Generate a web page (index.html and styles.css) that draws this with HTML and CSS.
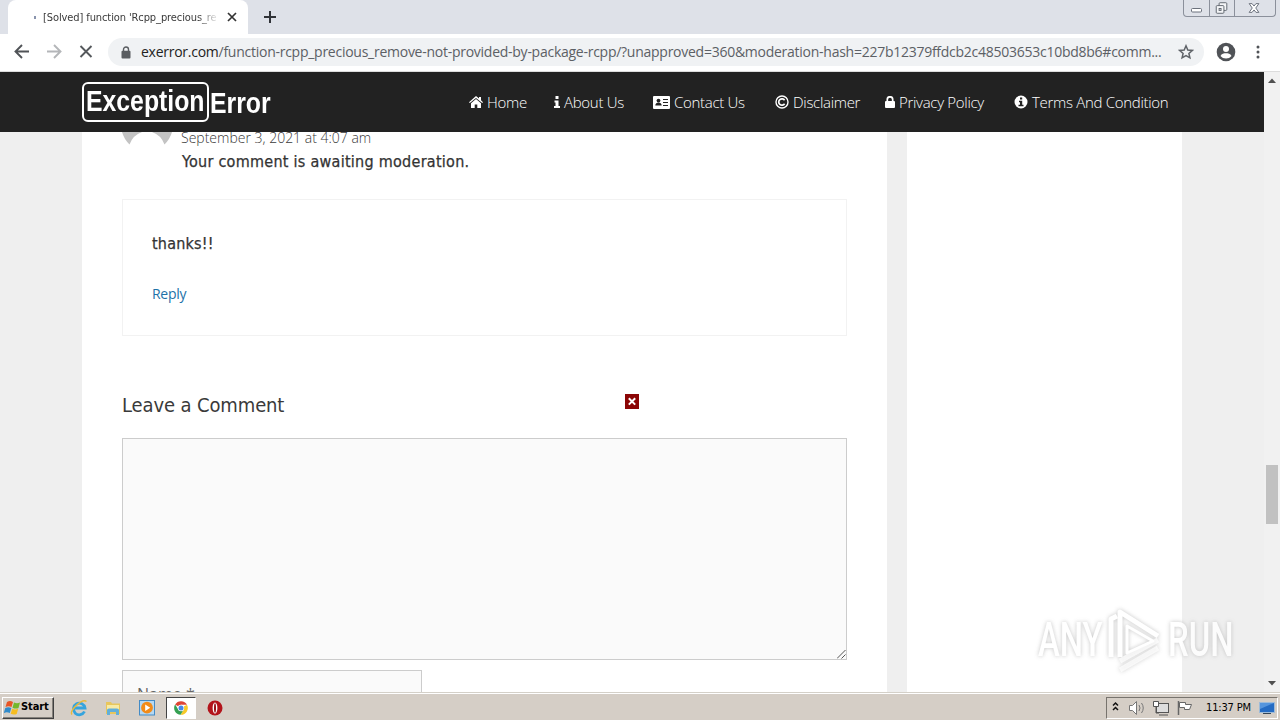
FILE: index.html
```
<!DOCTYPE html>
<html lang="en">
  <head>
    <meta charset="utf-8" />
    <title>[Solved] function 'Rcpp_precious_remove'</title>
    <link rel="stylesheet" href="styles.css">
  </head>
  <body>
    <div class="tabstrip">
      <div class="tab">
        <span class="tab-dot"></span>
        <span class="tab-title">[Solved] function 'Rcpp_precious_re</span>
        <svg class="tab-close" width="10" height="10" viewBox="0 0 10 10"><path d="M1 1l8 8M9 1L1 9" stroke="#333" stroke-width="1.7"/></svg>
      </div>
      <svg class="new-tab" width="14" height="14" viewBox="0 0 14 14"><path d="M7 1v12M1 7h12" stroke="#303338" stroke-width="2"/></svg>
      <div class="window-buttons">
        <svg width="25" height="16" viewBox="0 0 25 16"><rect x="7.500" y="8.500" width="10" height="3.500" rx="1" fill="#fff" stroke="#6b717c"/></svg>
        <svg width="25" height="16" viewBox="0 0 25 16"><g fill="#f4f5f7" stroke="#60666f"><rect x="9.500" y="2.500" width="8" height="8" rx="1"/><rect x="6.500" y="5.500" width="8" height="8" rx="1"/><rect x="9.500" y="8.500" width="2" height="2"/></g></svg>
        <svg width="41" height="16" viewBox="0 0 41 16"><path d="M14.500 3.500h3l2 2.500 2-2.500h3l-3.200 4.500 3.200 4.500h-3l-2-2.500-2 2.500h-3l3.200-4.500z" fill="#fff" stroke="#6b717c"/></svg>
      </div>
    </div>

    <div class="toolbar">
      <svg width="100" height="38" viewBox="0 0 100 38" fill="none" stroke-width="1.9">
        <path d="M29 18.500H16M22 12l-6.500 6.500L22 25" stroke="#505357"/>
        <path d="M47 18.500h13M54 12l6.500 6.500L54 25" stroke="#b4b6b9"/>
        <path d="M80.500 13l11 11M91.500 13l-11 11" stroke="#55585c"/>
      </svg>
      <div class="omnibox">
        <svg width="10" height="13" viewBox="0 0 10 13"><path d="M2.500 6V3.500a2.500 2.500 0 0 1 5 0V6" fill="none" stroke="#5a5d61" stroke-width="1.400"/><rect x="0.500" y="4.800" width="9" height="7.700" rx="1" fill="#5a5d61"/></svg>
        <span class="url"><b>exerror.com</b>/function-rcpp_precious_remove-not-provided-by-package-rcpp/?unapproved=360&amp;moderation-hash=227b12379ffdcb2c48503653c10bd8b6#comm...</span>
        <svg class="star" width="16" height="16" viewBox="0 0 16 16"><path d="M8 1.800l1.800 4.200 4.500.4-3.400 3 1 4.400L8 11.500l-3.900 2.300 1-4.400-3.400-3 4.500-.4z" fill="none" stroke="#5f6368" stroke-width="1.500"/></svg>
      </div>
      <svg class="profile" width="20" height="20" viewBox="0 0 20 20"><circle cx="10" cy="10" r="9.300" fill="#505357"/><circle cx="10" cy="7" r="3" fill="#fff"/><path d="M4.500 14c1-2.200 3.500-2.700 5.500-2.700s4.500.5 5.500 2.700c-1.300 1.700-3.300 2.500-5.500 2.500S5.800 15.700 4.500 14z" fill="#fff"/></svg>
      <svg class="kebab" width="4" height="16" viewBox="0 0 4 16" fill="#505357"><circle cx="2" cy="3" r="1.500"/><circle cx="2" cy="8" r="1.500"/><circle cx="2" cy="13" r="1.500"/></svg>
    </div>

    <div class="viewport">
      <div class="page">
        <header class="site-header">
          <div class="logo"><span class="logo-box"><span>Exception</span></span><span class="logo-error">Error</span></div>
          <nav class="nav">
            <a class="home"><svg width="14" height="12" viewBox="0 0 14 12" fill="#fff"><path d="M7 0l3 2.600V1h2v3.300L14 6.200l-.8.900L7 1.900.8 7.100 0 6.200z"/><path d="M7 3l5 4.200V12H8.300V8.500H5.700V12H2V7.200z"/></svg><span>Home</span></a>
            <a class="about"><svg width="6" height="12" viewBox="0 0 6 12" fill="#fff"><path d="M1.500 0h3v3h-3zM.500 4.500h4V10H6v2H0v-2h1.500V6.500h-1z"/></svg><span>About Us</span></a>
            <a class="contact"><svg width="17" height="13" viewBox="0 0 17 13"><rect width="17" height="13" rx="1" fill="#fff"/><circle cx="5.500" cy="4.600" r="1.900" fill="#222"/><path d="M2.300 9.500c0-4 6.400-4 6.400 0zM10 3h5v1h-5zM10 6h5v1h-5zM10 9h5v1h-5z" fill="#222"/></svg><span>Contact Us</span></a>
            <a class="disclaimer"><svg width="14" height="14" viewBox="0 0 14 14" fill="none" stroke="#fff"><circle cx="7" cy="7" r="6" stroke-width="1.400"/><path d="M9.600 5.200a3.200 3.200 0 1 0 0 3.600" stroke-width="1.700"/></svg><span>Disclaimer</span></a>
            <a class="privacy"><svg width="10" height="12" viewBox="0 0 10 12"><path d="M2.300 6V3.500a2.700 2.700 0 0 1 5.400 0V6" fill="none" stroke="#fff" stroke-width="1.700"/><rect y="5" width="10" height="7" rx="1" fill="#fff"/></svg><span>Privacy Policy</span></a>
            <a class="terms"><svg width="14" height="14" viewBox="0 0 14 14"><circle cx="7" cy="7" r="6.500" fill="#fff"/><path d="M6 2.500h2.200v2H6zM5 5.700h3.200v4H9.500v1.600h-5V9.700H6V7.200H5z" fill="#222"/></svg><span>Terms And Condition</span></a>
          </nav>
        </header>

        <div class="columns">
          <main class="content">
            <div class="comment-meta">
              <svg width="50" height="14" viewBox="0 0 50 14"><path d="M0 0h20Q11 3 7.500 12.500Q2 7 0 0zM30 0h20Q48 7 42.500 12.500Q39 3 30 0z" fill="#c3c3c3"/></svg>
              <div class="meta-text">
                <div class="date">September 3, 2021 at 4:07 am</div>
                <div class="moderation">Your comment is awaiting moderation.</div>
              </div>
            </div>
            <div class="comment-body">
              <p>thanks!!</p>
              <a class="reply">Reply</a>
            </div>
            <h3 class="comment-heading">Leave a Comment</h3>
            <div class="textarea">
              <svg width="9" height="9" viewBox="0 0 9 9"><path d="M0 8.500L8.500 0M4.500 8.500l4-4" stroke="#555"/></svg>
            </div>
            <div class="name-field">Name *</div>
          </main>
          <aside class="sidebar"></aside>
        </div>
        <svg class="ad-close" width="14" height="15" viewBox="0 0 14 15"><rect width="14" height="15" fill="#8b0505"/><path d="M3.800 4.200l6.400 6.400M10.200 4.200l-6.400 6.400" stroke="#fff" stroke-width="2"/></svg>
      </div>
      <div class="scrollbar">
        <svg width="16" height="16" viewBox="0 0 16 16"><path d="M4 11l4-4.500L12 11z" fill="#505050"/></svg>
        <div class="thumb"></div>
        <svg class="down" width="16" height="16" viewBox="0 0 16 16"><path d="M4 5h8l-4 4.500z" fill="#505050"/></svg>
      </div>
    </div>

    <div class="watermark">
      <span class="any">ANY</span>
      <svg width="62" height="66" viewBox="0 0 62 66" fill="none" stroke="#fff" stroke-width="5" stroke-linejoin="round"><path d="M7 50V12l6-3"/><path d="M16 50V5l38 24"/><path d="M23 46V19l26 15z" stroke-width="3"/><path d="M16 54l38-21M16 63l38-22" opacity=".75"/></svg>
      <span class="run">RUN</span>
    </div>

    <div class="taskbar">
      <div class="start">
        <svg width="17" height="16" viewBox="0 0 17 16"><path d="M3 2q3-2 6 0L7.500 7q-3-1.500-6 0z" fill="#e85525"/><path d="M10 2.500q3 1.500 6 0L14.500 8q-3 1.300-6-.3z" fill="#74b72b"/><path d="M1.300 8q3-1.500 6 0L5.800 13q-3-1.500-6 0z" fill="#318bcb"/><path d="M8.200 8.700q3 1.500 6 0L12.700 14q-3 1.300-6-.2z" fill="#f6bd20"/></svg>
        <span>Start</span>
      </div>
      <div class="launchers">
        <div class="launcher"><svg width="18" height="18" viewBox="0 0 18 18" fill="none"><path d="M14.500 12.500A5.800 5.800 0 1 1 15 9H5" stroke="#35a4dd" stroke-width="2.800"/><path d="M2 15.500C-1 12 12-1 16.500 2.500" stroke="#e8b93b" stroke-width="1.400"/></svg></div>
        <div class="launcher"><svg width="18" height="18" viewBox="0 0 18 18"><path d="M2 3h5l1 1.500h8V15H2z" fill="#e8c65c"/><path d="M3 6h12v5H3z" fill="#f8eaa4"/><path d="M3 16v-5q0-1.500 2-1.500h8q2 0 2 1.500v5h-3v-3H6v3z" fill="#62afd9"/></svg></div>
        <div class="launcher"><svg width="18" height="18" viewBox="0 0 18 18"><rect x="1.500" y="1.500" width="15" height="14.500" fill="#b5d8f2" stroke="#438bc6"/><circle cx="9" cy="8.700" r="5.900" fill="#f28b18"/><path d="M7.200 5.500v6.400l5-3.200z" fill="#fff"/></svg></div>
        <div class="launcher active"><svg width="14" height="14" viewBox="0 0 14 14"><path d="M7 7L1.100 3.500A6.800 6.800 0 0 1 13 3.800H7z" fill="#df4535"/><path d="M7 7l6-3.200A6.800 6.800 0 0 1 6.600 13.800L10 8z" fill="#f7c929"/><path d="M7 7l3 1-3.400 5.800A6.800 6.800 0 0 1 1.100 3.500L4 8z" fill="#35a052"/><circle cx="7" cy="7" r="3.200" fill="#fff"/><circle cx="7" cy="7" r="2.500" fill="#4688e8"/></svg></div>
        <div class="launcher"><svg width="16" height="16" viewBox="0 0 16 16"><circle cx="8" cy="8" r="7.500" fill="#b3141b"/><ellipse cx="8" cy="8" rx="2.400" ry="5.500" fill="#fff"/><ellipse cx="8" cy="8" rx="1" ry="4.700" fill="#971017"/></svg></div>
      </div>
      <div class="tray">
        <svg width="90" height="20" viewBox="0 0 90 20" fill="none">
          <path d="M6 7.500l2.500-2.500L11 7.500M6 12l2.500-2.500L11 12" stroke="#111" stroke-width="1.500"/>
          <path d="M22.500 7.500h3l4-4v13l-4-4h-3z" fill="#fff" stroke="#777"/><path d="M32 7q2 3 0 6M34.500 5q3.500 5 0 10" stroke="#777"/>
          <rect x="49.500" y="5.500" width="12" height="9" fill="#ddd" stroke="#555"/><path d="M52 17h9M46.500 3.500h5v5h-5zM49 8.500V15h3" stroke="#555"/><rect x="47" y="4" width="4" height="4" fill="#fff"/>
          <path d="M71.500 3v14" stroke="#666" stroke-width="1.500"/><path d="M72.500 4.500h6v2h6l-2 5h-5v-2h-5z" fill="#fff" stroke="#666"/>
        </svg>
        <span class="clock">11:37 PM</span>
        <svg width="16" height="14" viewBox="0 0 16 14"><rect x=".500" y="1.500" width="15" height="10" fill="#246bc3" stroke="#9dbbd9"/><path d="M1 2h14L1 8z" fill="#5595dd"/><path d="M4 12.500h8" stroke="#345"/></svg>
      </div>
    </div>
  </body>
</html>
```
FILE: styles.css
```
* {
  box-sizing: border-box;
}
body {
  margin: 0;
  width: 1280px;
  height: 720px;
  overflow: hidden;
  display: flex;
  flex-direction: column;
  position: relative;
  font-family: "Open Sans", sans-serif;
  color: #3a3a3a;
  white-space: nowrap;
}
svg {
  display: block;
  flex: none;
}

/* browser chrome */
.tabstrip {
  height: 34px;
  flex: none;
  display: flex;
  background: #dee1e8;
  padding-left: 8px;
}
.tab {
  width: 240px;
  height: 34px;
  background: #fff;
  border-radius: 8px 8px 0 0;
  display: flex;
  align-items: center;
  padding-left: 26px;
}
.tab-dot {
  width: 2px;
  height: 3px;
  background: #8994ad;
}
.tab-title {
  width: 176px;
  margin-left: 7px;
  overflow: hidden;
  font-family: "DejaVu Sans Condensed", "DejaVu Sans", sans-serif;
  font-size: 11px;
  letter-spacing: -0.1px;
  -webkit-mask-image: linear-gradient(90deg, #000 88%, transparent);
}
.tab-close {
  margin-left: 8px;
}
.new-tab {
  margin: 10px 0 0 15px;
}
.window-buttons {
  display: flex;
  margin: 0 4px 0 auto;
  width: 93px;
  height: 17px;
  border: 1px solid #8b909b;
  border-top: 0;
  border-radius: 0 0 4px 4px;
}
.window-buttons svg + svg {
  border-left: 1px solid #8b909b;
}
.toolbar {
  height: 38px;
  flex: none;
  display: flex;
  align-items: center;
  background: #fff;
  border-bottom: 1px solid #dcdcdc;
}
.toolbar > svg,
.omnibox {
  position: relative;
  top: -0.5px;
}
.omnibox {
  width: 1096px;
  height: 28px;
  margin-left: 8px;
  padding-left: 13px;
  border-radius: 14px;
  background: #f0f2f4;
  display: flex;
  align-items: center;
}
.url {
  width: 1030px;
  margin-left: 10px;
  font-size: 14px;
  line-height: 20px;
  color: #5c6065;
  letter-spacing: -0.26px;
}
.url b {
  font-weight: 400;
  color: #222;
}
.star {
  margin-left: 7px;
}
.profile {
  margin-left: 12px;
}
.kebab {
  margin-left: 20px;
}

/* page */
.viewport {
  height: 620px;
  flex: none;
  display: flex;
}
.page {
  width: 1264px;
  height: 620px;
  overflow: hidden;
  position: relative;
  background: #efefef;
}
.site-header {
  height: 60px;
  padding-left: 82px;
  background: #222;
  display: flex;
  align-items: center;
}
.logo {
  width: 387px;
  height: 40px;
  display: flex;
  color: #fff;
  font-family: "Liberation Sans", sans-serif;
  font-weight: 700;
}
.logo-box {
  width: 127px;
  height: 40px;
  border: 2px solid #fff;
  border-radius: 6px;
  padding-left: 2px;
  font-size: 29px;
  line-height: 34px;
}
.logo-box span,
.logo-error {
  display: inline-block;
  transform-origin: 0 50%;
  transform: scaleX(0.855);
}
.logo-error {
  margin-left: 1px;
  font-size: 29px;
  line-height: 43px;
}
.nav {
  display: grid;
  grid-template-columns: 85px 99px 122px 110px 129px 154px;
  color: #fff;
  font-size: 15px;
  font-weight: 300;
  line-height: 20px;
  letter-spacing: -0.3px;
}
.nav a {
  display: flex;
  align-items: center;
  gap: 4px;
}
.columns {
  display: grid;
  grid-template-columns: 805px 275px;
  column-gap: 20px;
  height: 560px;
  padding-left: 82px;
}
.content {
  background: #fff;
  padding: 0 40px;
}
.sidebar {
  background: #fff;
}
.comment-meta {
  display: flex;
  height: 67px;
}
.meta-text {
  margin-left: 9px;
  margin-top: -5px;
}
.date {
  font-size: 14px;
  font-weight: 300;
  line-height: 22px;
}
.moderation,
.comment-body p,
.comment-heading {
  font-family: "DejaVu Sans Condensed", "DejaVu Sans", sans-serif;
}
.moderation,
.comment-body p {
  color: #333;
  -webkit-text-stroke: 0.25px #333;
}
.moderation {
  padding-left: 1px;
  font-size: 16px;
  line-height: 26px;
  letter-spacing: 0.27px;
}
.comment-body {
  height: 137px;
  border: 1px solid #f2f2f2;
  padding: 32px 29px;
}
.comment-body p {
  margin: 0;
  font-size: 16px;
  line-height: 24px;
  letter-spacing: 0.2px;
}
.reply {
  display: block;
  margin-top: 28px;
  color: #1e72a8;
  font-size: 14px;
  line-height: 20px;
  letter-spacing: -0.3px;
}
.comment-heading {
  margin: 54px 0 18px;
  font-size: 20px;
  font-weight: 400;
  line-height: 30px;
  letter-spacing: -0.12px;
}
.textarea {
  width: 725px;
  height: 222px;
  background: #fafafa;
  border: 1px solid #ccc;
  display: flex;
  align-items: flex-end;
  justify-content: flex-end;
}
.name-field {
  width: 300px;
  height: 50px;
  margin-top: 10px;
  padding: 10px 14px;
  background: #fafafa;
  border: 1px solid #ccc;
  font-size: 16px;
  line-height: 26px;
  color: #666;
}
.ad-close {
  position: absolute;
  left: 625px;
  top: 322px;
}
.scrollbar {
  width: 16px;
  background: #f1f1f1;
  display: flex;
  flex-direction: column;
}
.thumb {
  width: 12px;
  height: 59px;
  margin: 377px 0 0 2px;
  background: #c1c1c1;
}
.down {
  margin-top: auto;
}

.watermark {
  position: absolute;
  left: 1038px;
  top: 607px;
  width: 210px;
  height: 66px;
  display: flex;
  align-items: center;
  color: #fff;
  font-family: Roboto, sans-serif;
  font-size: 49px;
  font-weight: 500;
  line-height: 70px;
  filter: drop-shadow(0 0 2px #bbb);
  opacity: 0.85;
}
.any,
.run {
  width: 66px;
  transform-origin: 0 50%;
  transform: scaleX(0.67);
}
.run {
  margin-left: 2px;
}

/* taskbar */
.taskbar {
  height: 28px;
  flex: none;
  border-top: 1px solid #d4d0c8;
  box-shadow: inset 0 1px #fff;
  background: #d5cec6;
  display: flex;
  align-items: center;
  padding: 2px 2px 0;
}
.start {
  width: 52px;
  height: 22px;
  border: 1px solid #fff;
  border-right-color: #404040;
  border-bottom-color: #404040;
  box-shadow: inset -1px -1px #85817b;
  display: flex;
  align-items: center;
  padding-left: 1px;
  color: #000;
  font-family: "DejaVu Sans Condensed", "DejaVu Sans", sans-serif;
  font-size: 11px;
  font-weight: 700;
  letter-spacing: -0.1px;
}
.start span {
  margin-top: -2px;
}
.launchers {
  display: flex;
  margin-left: 10px;
}
.launcher {
  width: 30px;
  height: 22px;
  margin-right: 4px;
  display: flex;
  align-items: center;
  justify-content: center;
}
.active {
  background: #fff;
  border: 1px solid #444;
  border-right-color: #fff;
  border-bottom-color: #fff;
}
.tray {
  width: 172px;
  height: 22px;
  margin-left: auto;
  border: 1px solid #77736d;
  border-right-color: #fff;
  border-bottom-color: #fff;
  display: flex;
  align-items: center;
}
.clock {
  width: 53px;
  margin-left: 9px;
  color: #000;
  font-family: "DejaVu Sans Condensed", "DejaVu Sans", sans-serif;
  font-size: 11px;
  letter-spacing: -0.15px;
}
```
